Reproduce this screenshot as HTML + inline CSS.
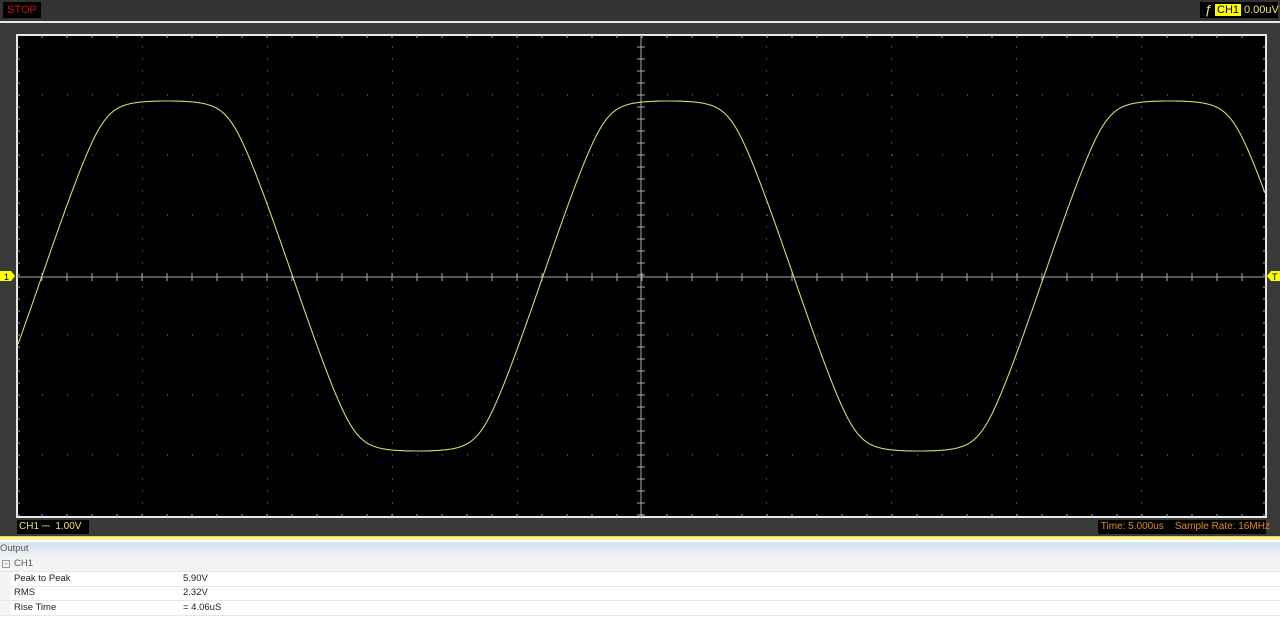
<!DOCTYPE html>
<html><head><meta charset="utf-8"><style>
body{margin:0;width:1280px;height:617px;overflow:hidden;background:#fff;font-family:"Liberation Sans",sans-serif;position:relative}
.top{position:absolute;left:0;top:0;width:1280px;height:21px;background:#333}
.stop{position:absolute;left:3px;top:2px;width:38px;height:16px;background:#000;color:#c8101a;font-size:11px;line-height:16px;text-align:center}
.trig{position:absolute;left:1200px;top:2px;width:78px;height:16px;background:#000;font-size:11px;line-height:16px;color:#e8e86a}
.frame{position:absolute;left:0;top:21px;width:1280px;height:516px;background:#3a3a3a;border-top:2px solid #e8e8e8;box-sizing:border-box}
.lbl{position:absolute;background:#000;font-size:10px;line-height:14px}
.out{position:absolute;left:0;top:541px;width:1280px;height:76px;background:#fff;font-size:9.5px;color:#222}
.row{position:absolute;left:0;width:1280px;height:14px;line-height:14px;border-bottom:1px solid #e6e6e6}
</style></head><body>
<div class="top"><div class="stop">STOP</div>
<div class="trig"><span style="position:absolute;left:5px;top:0;font-size:13px;color:#ee6">&#x192;</span><span style="position:absolute;left:15px;top:2px;height:12px;line-height:12px;background:#ffff00;color:#000;padding:0 2px">CH1</span><span style="position:absolute;left:44px">0.00uV</span></div></div>
<div class="frame"></div>
<svg id="sc" style="position:absolute;left:0;top:0" width="1280" height="617"></svg>
<div class="lbl" style="left:17px;top:520px;width:70px;color:#e8e86a;padding-left:2px">CH1 &#x2393; &nbsp;1.00V</div>
<div class="lbl" style="left:1098px;top:520px;width:168px;color:#e08a20;white-space:nowrap">&nbsp;Time: 5.000us &nbsp;&nbsp;&nbsp;Sample Rate: 16MHz</div>
<div style="position:absolute;left:0;top:536px;width:1280px;height:3px;background:#f5f09a;border-top:1px solid #e8d84a"></div>
<div class="out">
<div class="row" style="top:1px;height:15px;background:linear-gradient(#d6e2ee,#eef3f8);color:#555">Output</div>
<div class="row" style="top:16px;background:#f4f4f4;color:#555"><span style="position:absolute;left:2px;top:3px;width:6px;height:6px;border:1px solid #999;font-size:8px;line-height:6px;text-align:center">-</span><span style="position:absolute;left:14px">CH1</span></div>
<div class="row" style="top:31px"><span style="position:absolute;left:0;width:11px;height:14px;background:#f4f4f4"></span><span style="position:absolute;left:14px">Peak to Peak</span><span style="position:absolute;left:183px">5.90V</span></div>
<div class="row" style="top:45px"><span style="position:absolute;left:0;width:11px;height:14px;background:#f4f4f4"></span><span style="position:absolute;left:14px">RMS</span><span style="position:absolute;left:183px">2.32V</span></div>
<div class="row" style="top:60px"><span style="position:absolute;left:0;width:11px;height:14px;background:#f4f4f4"></span><span style="position:absolute;left:14px">Rise Time</span><span style="position:absolute;left:183px">= 4.06uS</span></div>
</div>
<script>
var s='',L=17,R=1266,T=35,B=517,cx=641,cy=277;
s+='<rect x="'+L+'" y="'+T+'" width="'+(R-L)+'" height="'+(B-T)+'" fill="#000" stroke="#e8e8e8" stroke-width="2"/>';
var d='';
for(var i=1;i<10;i++){var x=L+i*124.9;if(i==5)continue;for(var y=T+12;y<B;y+=12)d+='M'+x.toFixed(0)+' '+y+'h1';}
for(var j=1;j<8;j++){var y=T+j*60;if(j==4)continue;for(var x=L+25;x<R;x+=25)d+='M'+x.toFixed(0)+' '+y+'h1';}
s+='<path d="'+d+'" stroke="#888" stroke-width="1"/>';
s+='<path d="M'+cx+' '+T+'V'+B+'M'+L+' '+cy+'H'+R+'" stroke="#aaa" stroke-width="1"/>';
var t='';
for(var x=L+25;x<R;x+=25){t+='M'+x.toFixed(0)+' '+(cy-4)+'v8M'+x.toFixed(0)+' '+T+'v3M'+x.toFixed(0)+' '+B+'v-3';}
for(var y=T+12;y<B;y+=12){t+='M'+(cx-4)+' '+y+'h8M'+L+' '+y+'h3M'+R+' '+y+'h-3';}
s+='<path d="'+t+'" stroke="#aaa" stroke-width="1"/>';
var p='',k=1.3,n=9,norm=k/Math.pow(1+Math.pow(k,n),1/n);
for(var x=18;x<=1265;x+=1){var sn=Math.sin(2*Math.PI*(x-42)/501);var u=k*sn;var v=u/Math.pow(1+Math.pow(Math.abs(u),n),1/n)/norm;var y=276-175*v;p+=(p?'L':'M')+x+' '+y.toFixed(1);}
s+='<path d="'+p+'" stroke="#d8d870" stroke-width="1.1" fill="none"/>';
s+='<path d="M0 271h11l4 5l-4 5h-11z" fill="#ffff00"/><text x="4" y="280" font-size="9" font-family="Liberation Sans">1</text>';
s+='<path d="M1280 271h-9l-4 5l4 5h9z" fill="#ffff00"/><text x="1272" y="280" font-size="9" font-family="Liberation Sans">T</text>';
document.getElementById('sc').innerHTML=s;
</script>
</body></html>
